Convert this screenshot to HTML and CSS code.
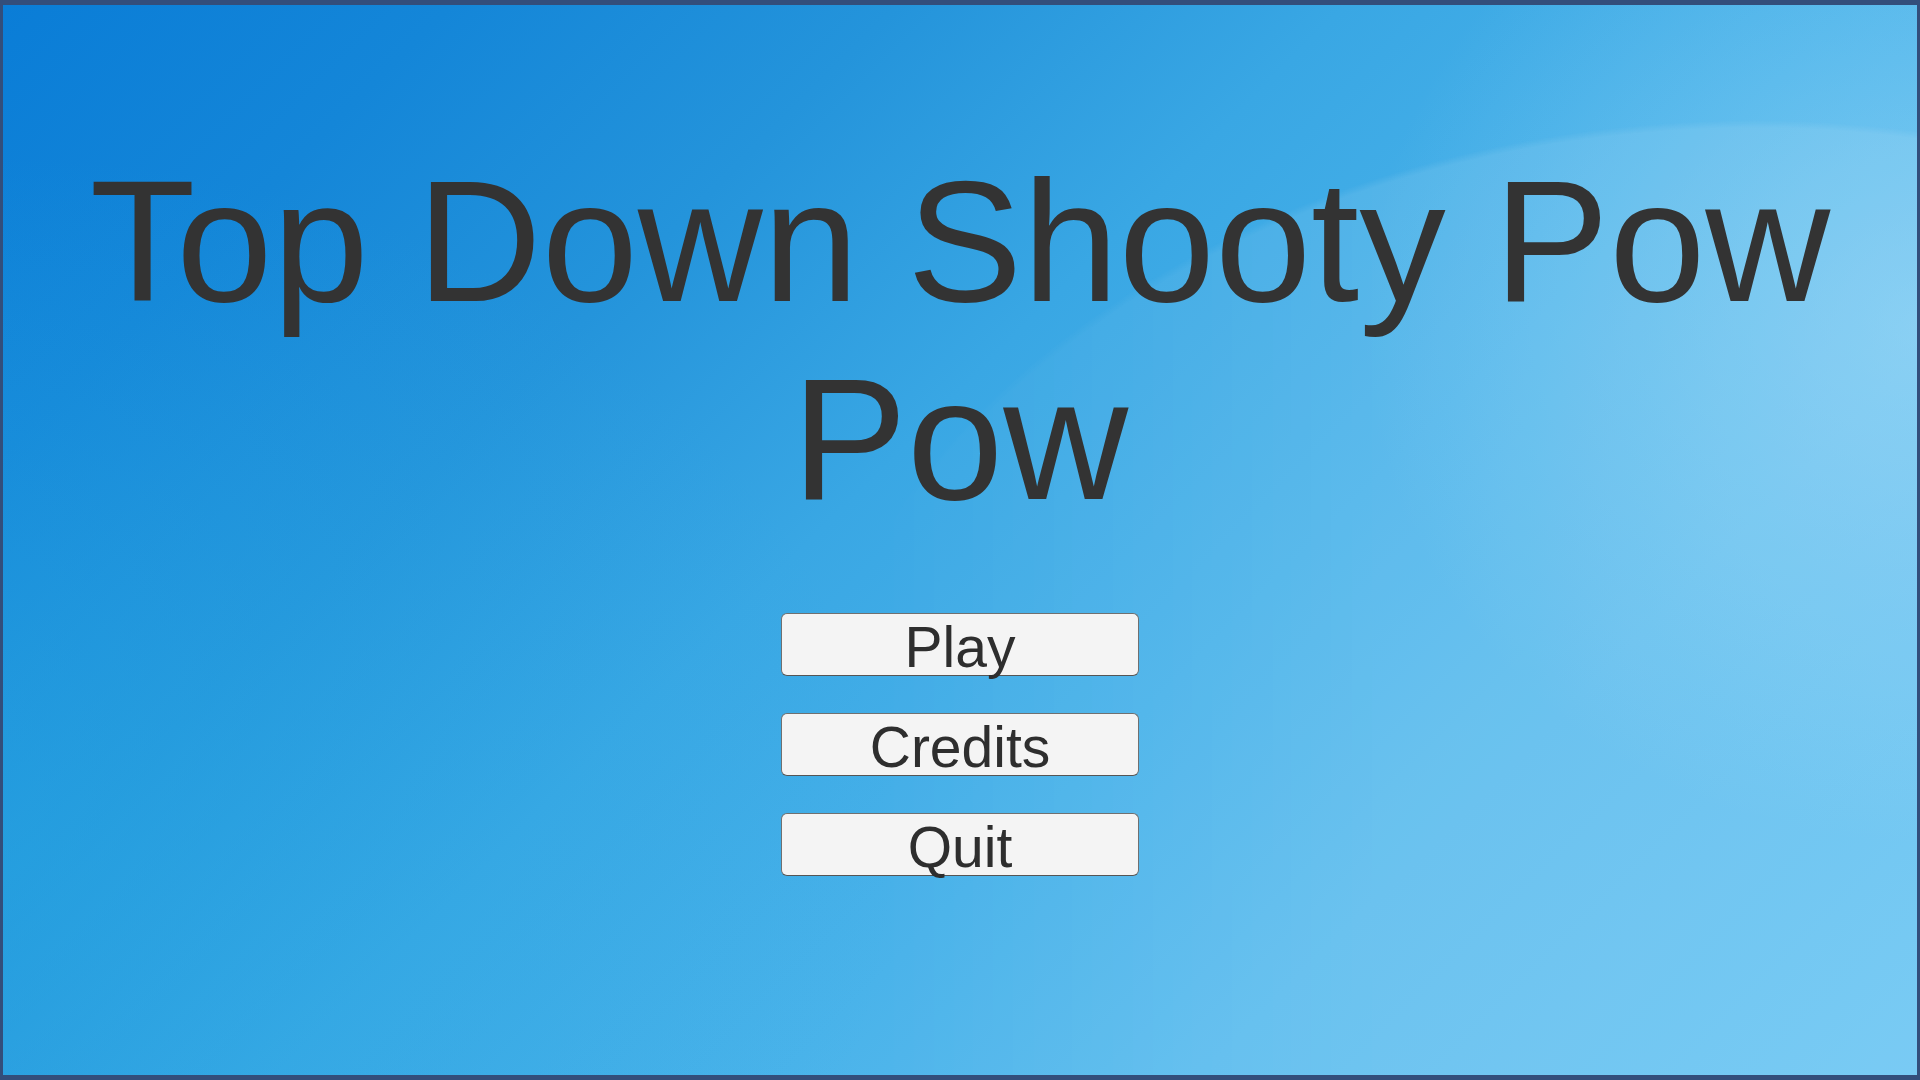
FILE: index.html
```html
<!DOCTYPE html>
<html lang="en">
<head>
    <meta charset="UTF-8">
    <meta name="viewport" content="width=device-width, initial-scale=1.0">
    <title>Top Down Shooty Pow Pow</title>
    <link rel="stylesheet" href="styles.css">
</head>
<body>
    <div class="screen">
        <h1 class="title">Top Down Shooty Pow Pow</h1>
        <div class="menu">
            <button class="menu-button">Play</button>
            <button class="menu-button">Credits</button>
            <button class="menu-button">Quit</button>
        </div>
    </div>
</body>
</html>
```

FILE: styles.css
```css
html, body {
    margin: 0;
    padding: 0;
}
body {
    font-family: "Liberation Sans", Arial, sans-serif;
    color: #333;
    background-color: #334e7b;
}
.screen {
    position: relative;
    box-sizing: border-box;
    width: 100%;
    height: 100vh;
    border-style: solid;
    border-color: #334e7b;
    border-width: 5px 3px 5px 3px;
    padding-top: 137px;
    overflow: hidden;
    background:
        radial-gradient(ellipse 560px 520px at 1920px 320px, rgba(160, 218, 247, 0.5), rgba(160, 218, 247, 0) 100%),
        radial-gradient(ellipse 900px 700px at 0 850px, rgba(40, 172, 228, 0.45), rgba(40, 172, 228, 0) 100%),
        linear-gradient(135deg, #0a7dd7 0%, #1486d8 15%, #2494db 30%, #39a7e4 45%, #4ab3ea 62%, #5bbcee 76%, #6ac5f3 100%);
}
/* soft light swoosh across the top right corner */
.screen::before {
    content: "";
    position: absolute;
    inset: 0;
    background: radial-gradient(ellipse 1000px 790px at 1750px 905px, rgba(255, 255, 255, 0.1) 99%, rgba(255, 255, 255, 0) 100%);
    -webkit-mask-image: linear-gradient(to right, transparent 45%, #000 72%);
    mask-image: linear-gradient(to right, transparent 45%, #000 72%);
    pointer-events: none;
}
.title {
    position: relative;
    margin: 0;
    font-size: 173px;
    line-height: 198px;
    font-weight: normal;
    text-align: center;
    color: #333;
}
.menu {
    position: relative;
    margin-top: 75px;
    display: flex;
    flex-direction: column;
    align-items: center;
    gap: 37px;
}
.menu-button {
    width: 358px;
    height: 63px;
    padding: 0;
    background-color: #f4f4f4;
    border: 1px solid #707070;
    border-bottom-color: #555;
    border-radius: 6px;
    font-family: "Liberation Sans", Arial, sans-serif;
    font-size: 57px;
    color: #2e2e2e;
    cursor: pointer;
}
.menu-button:hover {
    background-color: #fff;
}
```
